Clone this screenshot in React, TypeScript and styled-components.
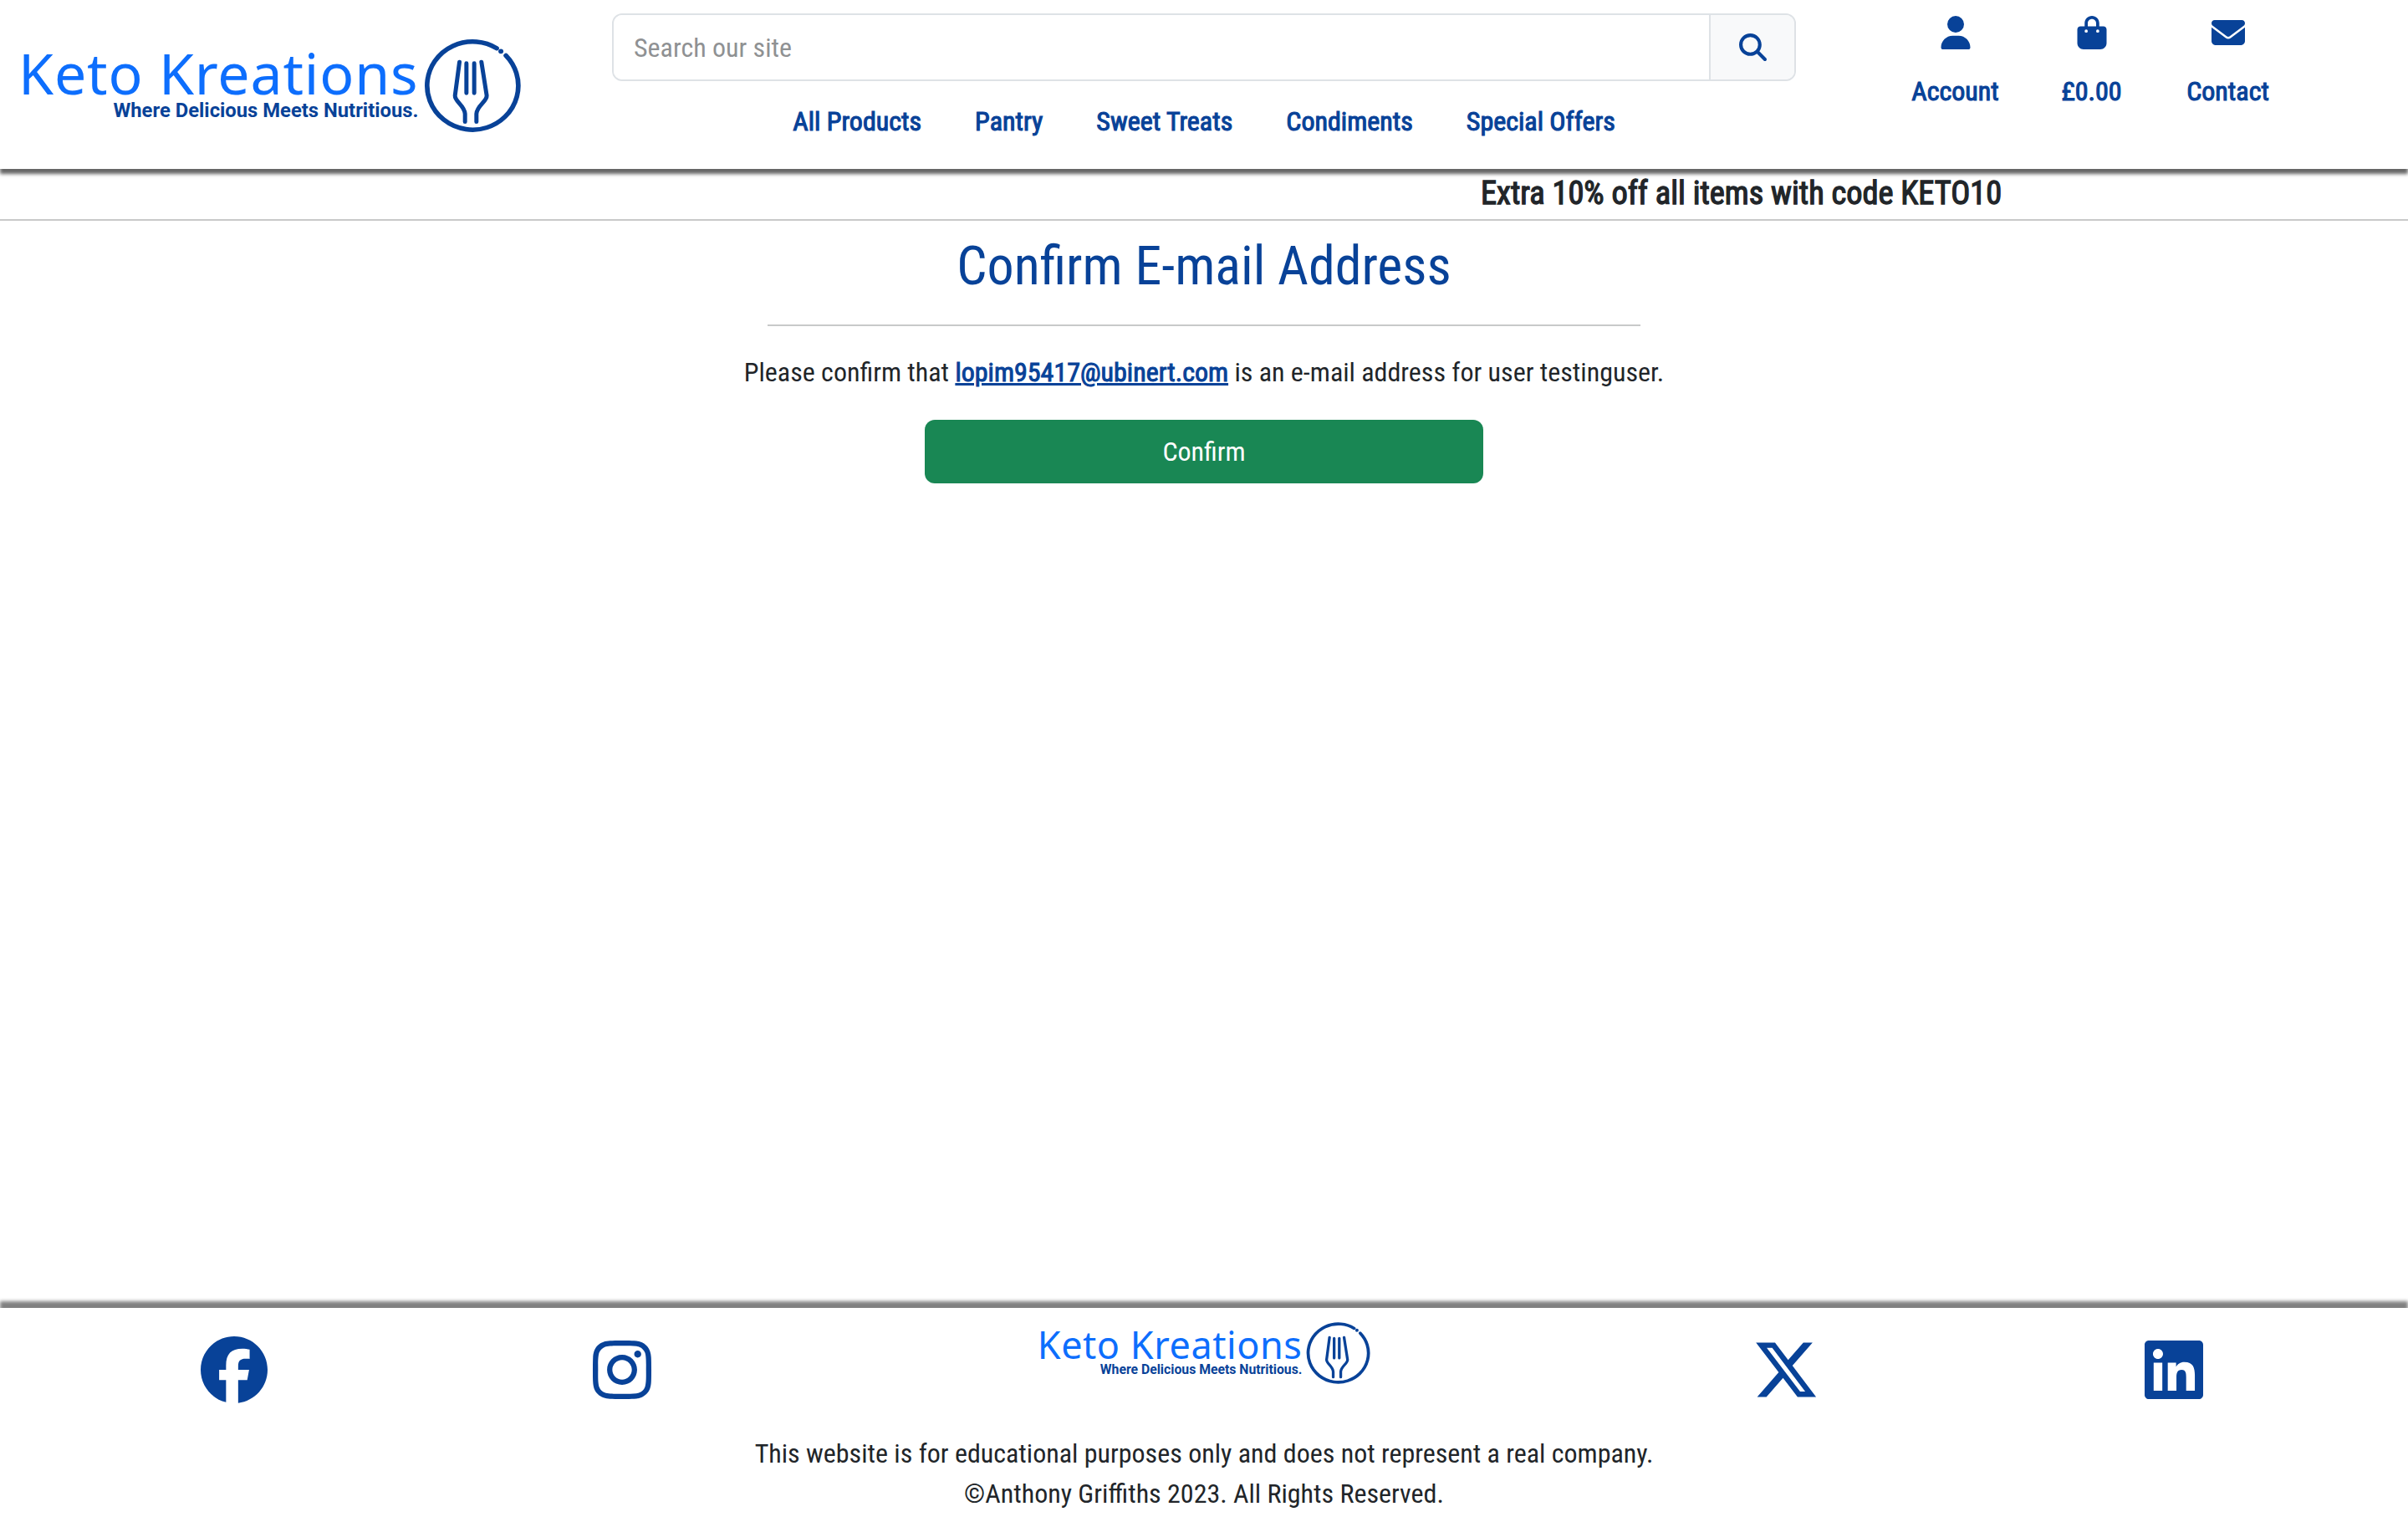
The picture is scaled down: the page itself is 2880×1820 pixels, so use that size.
import * as React from 'react'
import styled, { createGlobalStyle } from 'styled-components'
import { FaBagShopping, FaEnvelope, FaFacebook, FaInstagram, FaLinkedin, FaMagnifyingGlass, FaUser, FaXTwitter } from 'react-icons/fa6'

const navy = '#084298'
const ink = '#212529'

const GlobalStyle = createGlobalStyle`
	* { box-sizing: border-box; }
	body {
		margin: 0;
		background: #fff;
		color: ${ink};
		font-family: "Roboto Condensed", Roboto, "Liberation Sans", sans-serif;
		font-stretch: 75%;
		font-size: 32px;
		line-height: 1.5;
	}
`

const Page = styled.div`
	display: flex;
	flex-direction: column;
	min-height: 100vh;
`

const Header = styled.header`
	display: grid;
	grid-template-columns: 732px 1416px 1fr;
	height: 202px;
	position: relative;
	box-shadow: 0 6px 4px #666;
`

const LogoCell = styled.div`
	padding: 42px 0 0 22px;
`

const LogoWrap = styled.a<{ $size: number }>`
	display: inline-flex;
	align-items: center;
	gap: 0.06em;
	font-size: ${p => p.$size}px;
	text-decoration: none;
`

const LogoText = styled.div`
	display: flex;
	flex-direction: column;
	align-items: flex-end;
	padding-bottom: 0.02em;
`

const LogoName = styled.span`
	color: #0d6efd;
	font-family: "Noto Sans", sans-serif;
	font-stretch: 100%;
	font-weight: 400;
	font-size: 1em;
	line-height: 1;
	letter-spacing: 0.012em;
`

const LogoTag = styled.span`
	color: ${navy};
	font-family: Roboto, sans-serif;
	font-stretch: 97%;
	font-weight: 700;
	font-size: 0.35em;
	line-height: 1.1;
	margin-top: -0.05em;
`

const LogoMark = styled.svg`
	width: 1.76em;
	height: 1.7em;
	flex: none;
`

const CenterCell = styled.div`
	padding-top: 16px;
`

const SearchGroup = styled.form`
	display: flex;
	height: 81px;
	border: 2px solid #dee2e6;
	border-radius: 12px;
	overflow: hidden;
`

const SearchInput = styled.input`
	flex: 1;
	border: 0;
	outline: 0;
	padding: 0 24px;
	font: inherit;
	font-stretch: 75%;
	color: ${ink};
	&::placeholder { color: #8f9193; }
`

const SearchButton = styled.button`
	width: 102px;
	border: 0;
	border-left: 2px solid #dee2e6;
	background: #f8f9fa;
	color: ${navy};
	font-size: 33px;
	display: flex;
	align-items: center;
	justify-content: center;
	padding: 0;
`

const Nav = styled.nav`
	display: flex;
	justify-content: center;
	gap: 64px;
	margin-top: 24px;
`

const NavLink = styled.a`
	color: ${navy};
	font-size: 32px;
	font-weight: 400;
	-webkit-text-stroke: 1.1px ${navy};
	line-height: 48px;
	text-decoration: none;
`

const Tools = styled.div`
	display: grid;
	grid-template-columns: repeat(3, 163px);
	padding: 19px 0 0 109px;
`

const Tool = styled.a`
	display: flex;
	flex-direction: column;
	align-items: center;
	color: ${navy};
	text-decoration: none;
	font-size: 32px;
	font-weight: 400;
	-webkit-text-stroke: 1.1px ${navy};
	line-height: 48px;
	svg { font-size: 40px; height: 40px; margin-bottom: 26px; }
`

const Banner = styled.div`
	height: 62px;
	padding: 5px 0 0 1771px;
	border-bottom: 2px solid #c8c9c9;
	font-size: 38.4px;
	font-weight: 400;
	-webkit-text-stroke: 1.3px ${ink};
	line-height: 48px;
	white-space: nowrap;
`

const Main = styled.main`
	flex: 1;
	display: flex;
	flex-direction: column;
	align-items: center;
`

const Title = styled.h1`
	margin: 17px 0 0;
	color: ${navy};
	font-size: 64px;
	font-weight: 400;
	line-height: 1.2;
`

const Rule = styled.hr`
	width: 1044px;
	height: 2px;
	margin: 30px 0 0;
	border: 0;
	background: #c8c9c9;
`

const Lead = styled.p`
	margin: 31px 0 0;
`

const Mail = styled.a`
	color: ${navy};
	font-weight: 400;
	-webkit-text-stroke: 1px ${navy};
	text-decoration: underline;
`

const ConfirmButton = styled.button`
	width: 668px;
	height: 76px;
	margin-top: 33px;
	border: 0;
	border-radius: 12px;
	background: #198754;
	color: #fff;
	font: inherit;
	font-stretch: 75%;
`

const Footer = styled.footer`
	position: relative;
	height: 256px;
	box-shadow: 0 -8px 4px #808080;
	text-align: center;
`

const FooterRow = styled.div`
	display: grid;
	grid-template-columns: 560px 368px 1024px 368px 560px;
	height: 150px;
	justify-items: center;
`

const Social = styled.a`
	color: ${navy};
	font-size: 80px;
	line-height: 1;
	height: 80px;
	margin-top: 34px;
	svg { display: block; }
`

const FooterLogo = styled.div`
	padding-top: 14px;
`

const FooterNote = styled.p`
	margin: 0;
`

const ForkMark = () => (
	<LogoMark viewBox="50 37 360 360" preserveAspectRatio="none" fill="none" stroke={navy}>
		<path d="M321 86A164 164 0 1 0 354 113" strokeWidth="17" strokeLinecap="round" />
		<circle cx="336" cy="97" r="9" fill={navy} stroke="none" />
		<path
			d="M187 137L171 262C170 285 205 298 207 330V360M266 137L285 262C286 285 250 298 248 330V360M212 142V253M240 142V253"
			strokeWidth="15"
			strokeLinecap="round"
		/>
	</LogoMark>
)

const Logo = ({ size }: { size: number }) => (
	<LogoWrap $size={size} href="#">
		<LogoText>
			<LogoName>Keto Kreations</LogoName>
			<LogoTag>Where Delicious Meets Nutritious.</LogoTag>
		</LogoText>
		<ForkMark />
	</LogoWrap>
)

export default function App() {
	return (
		<Page>
			<GlobalStyle />
			<Header>
				<LogoCell>
					<Logo size={68} />
				</LogoCell>
				<CenterCell>
					<SearchGroup onSubmit={e => e.preventDefault()}>
						<SearchInput placeholder="Search our site" />
						<SearchButton type="submit" aria-label="Search">
							<FaMagnifyingGlass />
						</SearchButton>
					</SearchGroup>
					<Nav>
						{['All Products', 'Pantry', 'Sweet Treats', 'Condiments', 'Special Offers'].map(item => (
							<NavLink key={item} href="#">{item}</NavLink>
						))}
					</Nav>
				</CenterCell>
				<Tools>
					<Tool href="#"><FaUser />Account</Tool>
					<Tool href="#"><FaBagShopping />£0.00</Tool>
					<Tool href="#"><FaEnvelope />Contact</Tool>
				</Tools>
			</Header>
			<Banner>Extra 10% off all items with code KETO10</Banner>
			<Main>
				<Title>Confirm E-mail Address</Title>
				<Rule />
				<Lead>
					Please confirm that <Mail href="#">lopim95417@ubinert.com</Mail> is an e-mail address for user testinguser.
				</Lead>
				<ConfirmButton type="button">Confirm</ConfirmButton>
			</Main>
			<Footer>
				<FooterRow>
					<Social href="#" aria-label="Facebook"><FaFacebook /></Social>
					<Social href="#" aria-label="Instagram"><FaInstagram /></Social>
					<FooterLogo><Logo size={45} /></FooterLogo>
					<Social href="#" aria-label="X"><FaXTwitter /></Social>
					<Social href="#" aria-label="LinkedIn"><FaLinkedin /></Social>
				</FooterRow>
				<FooterNote>This website is for educational purposes only and does not represent a real company.</FooterNote>
				<FooterNote>©Anthony Griffiths 2023. All Rights Reserved.</FooterNote>
			</Footer>
		</Page>
	)
}
